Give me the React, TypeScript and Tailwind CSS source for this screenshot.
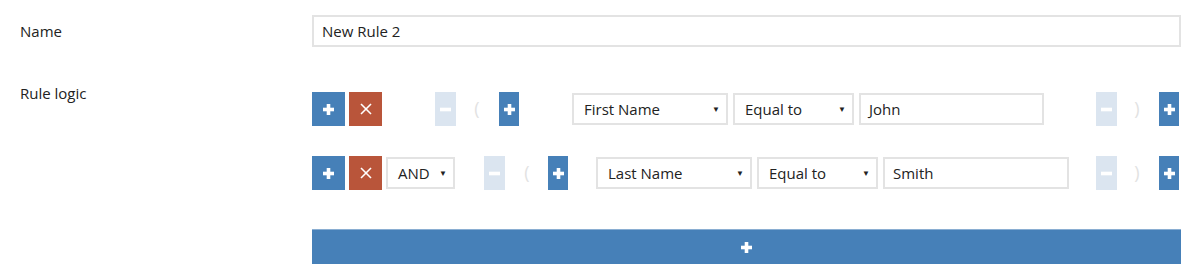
import React from 'react';

const PlusIcon = ({ size = 11 }: { size?: number }) => (
  <svg width={size} height={size} viewBox="0 0 11 11" fill="white">
    <rect x="3.7" y="0" width="3.6" height="11" />
    <rect x="0" y="3.7" width="11" height="3.6" />
  </svg>
);

const CrossIcon = () => (
  <svg width="12" height="12" viewBox="0 0 12 12" stroke="white" strokeWidth="1.6">
    <line x1="1" y1="1" x2="11" y2="11" />
    <line x1="11" y1="1" x2="1" y2="11" />
  </svg>
);

const MinusIcon = () => (
  <svg width="11" height="11" viewBox="0 0 11 11" fill="white">
    <rect x="0" y="3.7" width="11" height="3.6" />
  </svg>
);

const Caret = () => <span className="text-[8px] leading-none text-[#222]">▼</span>;

function AddBtn({ wide }: { wide?: boolean }) {
  return (
    <button
      className={`${wide ? 'w-[33px]' : 'w-[20px]'} h-[34px] bg-[#4680b8] flex items-center justify-center shrink-0`}
    >
      <PlusIcon />
    </button>
  );
}

function RemoveBtn() {
  return (
    <button className="w-[33px] h-[34px] bg-[#b9553a] flex items-center justify-center shrink-0">
      <CrossIcon />
    </button>
  );
}

function MinusBtn() {
  return (
    <button className="w-[21px] h-[34px] bg-[#dbe5f0] flex items-center justify-center shrink-0">
      <MinusIcon />
    </button>
  );
}

function Paren({ ch }: { ch: string }) {
  return (
    <span className="inline-block text-[18px] text-[#e2e2e2] leading-none w-[10px] text-center">{ch}</span>
  );
}

function Select({ value, width }: { value: string; width: string }) {
  return (
    <div
      className={`${width} h-[32px] border-2 border-[#e3e3e3] bg-white flex items-center justify-between pl-[10px] pr-[6px] shrink-0`}
    >
      <span>{value}</span>
      <Caret />
    </div>
  );
}

function TextBox({ value, width }: { value: string; width: string }) {
  return (
    <div className={`${width} h-[32px] border-2 border-[#e3e3e3] bg-white flex items-center pl-[8px] shrink-0`}>
      {value}
    </div>
  );
}

export default function App() {
  return (
    <div
      className="w-[1200px] h-[280px] bg-white text-[15px] text-[#222]"
      style={{ fontFamily: '"Open Sans", "Noto Sans", sans-serif' }}
    >
      {/* Name */}
      <div className="flex pt-[15px]">
        <div className="w-[312px] pl-[20px] flex items-center h-[32px]">Name</div>
        <div className="w-[869px] h-[32px] border-2 border-[#e3e3e3] flex items-center pl-[8px]">New Rule 2</div>
      </div>

      {/* Rule logic */}
      <div className="flex mt-[32px]">
        <div className="w-[312px] pl-[20px] pt-[3px]">Rule logic</div>
        <div className="w-[869px] flex flex-col">
          {/* row 1 */}
          <div className="flex items-center mt-[13px]">
            <AddBtn wide />
            <div className="ml-[4px]"><RemoveBtn /></div>
            <div className="ml-[53px]"><MinusBtn /></div>
            <div className="ml-[16px]"><Paren ch="(" /></div>
            <div className="ml-[17px]"><AddBtn /></div>
            <div className="ml-[53px]"><Select value="First Name" width="w-[156px]" /></div>
            <div className="ml-[5px]"><Select value="Equal to" width="w-[121px]" /></div>
            <div className="ml-[5px]"><TextBox value="John" width="w-[185px]" /></div>
            <div className="ml-[52px]"><MinusBtn /></div>
            <div className="ml-[15px]"><Paren ch=")" /></div>
            <div className="ml-[17px]"><AddBtn /></div>
          </div>

          {/* row 2 */}
          <div className="flex items-center mt-[30px]">
            <AddBtn wide />
            <div className="ml-[4px]"><RemoveBtn /></div>
            <div className="ml-[4px]"><Select value="AND" width="w-[69px]" /></div>
            <div className="ml-[29px]"><MinusBtn /></div>
            <div className="ml-[17px]"><Paren ch="(" /></div>
            <div className="ml-[16px]"><AddBtn /></div>
            <div className="ml-[28px]"><Select value="Last Name" width="w-[156px]" /></div>
            <div className="ml-[5px]"><Select value="Equal to" width="w-[121px]" /></div>
            <div className="ml-[5px]"><TextBox value="Smith" width="w-[186px]" /></div>
            <div className="ml-[27px]"><MinusBtn /></div>
            <div className="ml-[15px]"><Paren ch=")" /></div>
            <div className="ml-[17px]"><AddBtn /></div>
          </div>

          <button className="mt-[39px] w-[869px] h-[35px] bg-[#4680b8] border-t border-[#8aaed2] flex items-center justify-center">
            <PlusIcon size={11} />
          </button>
        </div>
      </div>
    </div>
  );
}
